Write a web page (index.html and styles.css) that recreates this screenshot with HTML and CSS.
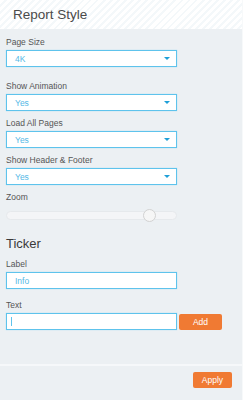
FILE: index.html
```html
<!DOCTYPE html>
<html lang="en">
<head>
  <meta charset="UTF-8">
  <meta name="viewport" content="width=device-width, initial-scale=1.0">
  <title>Report Style</title>
  <link rel="stylesheet" href="styles.css">
</head>
<body>
  <div class="panel">
    <!-- Header -->
    <div class="panel-header">Report Style</div>

    <!-- Settings -->
    <div class="panel-body">
      <div class="field first">
        <label>Page Size</label>
        <div class="select"><span>4K</span><i class="caret"></i></div>
      </div>
      <div class="field">
        <label>Show Animation</label>
        <div class="select"><span>Yes</span><i class="caret"></i></div>
      </div>
      <div class="field">
        <label>Load All Pages</label>
        <div class="select"><span>Yes</span><i class="caret"></i></div>
      </div>
      <div class="field">
        <label>Show Header &amp; Footer</label>
        <div class="select"><span>Yes</span><i class="caret"></i></div>
      </div>
      <div class="field">
        <label>Zoom</label>
        <input class="slider" type="range" min="0" max="100" value="87">
      </div>

      <h2>Ticker</h2>
      <div class="field">
        <label>Label</label>
        <input class="text-input" type="text" value="Info">
      </div>
      <div class="field">
        <label>Text</label>
        <div class="row">
          <div class="text-input empty"><span class="cursor"></span></div>
          <button class="btn add">Add</button>
        </div>
      </div>
    </div>

    <!-- Footer -->
    <div class="panel-footer">
      <button class="btn apply">Apply</button>
    </div>
  </div>
</body>
</html>
```

FILE: styles.css
```css
body {
  margin: 0;
  font-family: 'Liberation Sans', Arial, sans-serif;
  background-color: #ecf0f3;
  color: #555;
}

.panel {
  width: 242px;
  height: 400px;
  display: flex;
  flex-direction: column;
  border-right: 1px solid #f7f9fa;
}

/* Header with very light diagonal stripes */
.panel-header {
  height: 29px;
  box-sizing: border-box;
  padding: 7px 0 0 13px;
  font-size: 13.5px;
  color: #4a4a4a;
  background-color: #fff;
  background-image: repeating-linear-gradient(135deg, #fff 0, #fff 3px, #f4f8fa 3px, #f4f8fa 5px);
}

.panel-body {
  flex: 1;
  padding: 8px 6px 0 6px;
}

.field {
  margin-bottom: 7px;
}

.field.first {
  margin-bottom: 14px;
}

.field label {
  display: block;
  font-size: 8.5px;
  line-height: 11px;
  margin-bottom: 2px;
  color: #555;
}

/* Dropdown look */
.select {
  width: 171px;
  height: 17px;
  box-sizing: border-box;
  border: 1px solid #5ec3ec;
  box-shadow: 0 0 1px #9ad8f2;
  background-color: #fff;
  display: flex;
  align-items: center;
  justify-content: space-between;
  padding: 0 6px 0 8px;
  font-size: 8.5px;
  color: #55b9e6;
}

.caret {
  width: 0;
  height: 0;
  border-left: 3px solid transparent;
  border-right: 3px solid transparent;
  border-top: 3px solid #1f9fd8;
}

/* Zoom slider */
.slider {
  -webkit-appearance: none;
  appearance: none;
  display: block;
  width: 171px;
  height: 14px;
  margin: 5px 0 0 0;
  background: transparent;
}

.slider::-webkit-slider-runnable-track {
  height: 9px;
  box-sizing: border-box;
  background-color: #f4f5f7;
  border: 1px solid #e6e9ec;
  border-radius: 5px;
}

.slider::-webkit-slider-thumb {
  -webkit-appearance: none;
  width: 13px;
  height: 13px;
  margin-top: -3px;
  border-radius: 50%;
  background-color: #f6f6f6;
  border: 1px solid #d2d2d2;
  box-sizing: border-box;
}

h2 {
  font-size: 13px;
  font-weight: normal;
  line-height: 15px;
  margin: 14px 0 8px 0;
  color: #3a3a3a;
}

.text-input {
  display: block;
  width: 171px;
  height: 17px;
  box-sizing: border-box;
  border: 1px solid #5ec3ec;
  box-shadow: 0 0 1px #9ad8f2;
  background-color: #fff;
  padding: 0 0 0 8px;
  font-family: inherit;
  font-size: 8.5px;
  color: #55b9e6;
  outline: none;
}

h2 + .field {
  margin-bottom: 11px;
}

.text-input.empty {
  display: flex;
  align-items: center;
  padding-left: 4px;
}

.cursor {
  width: 1px;
  height: 9px;
  background-color: #5ec3ec;
}

.row {
  display: flex;
  align-items: center;
  gap: 2px;
}

/* Orange buttons */
.btn {
  height: 16px;
  padding: 0;
  border: none;
  border-radius: 2px;
  background-color: #f07a33;
  color: #fff;
  font-family: inherit;
  font-size: 8.5px;
}

.btn.add {
  width: 43px;
}

.btn.apply {
  width: 39px;
}

.panel-footer {
  border-top: 2px solid #f6f8fa;
  padding: 6px 10px 12px 0;
  display: flex;
  justify-content: flex-end;
}
```
